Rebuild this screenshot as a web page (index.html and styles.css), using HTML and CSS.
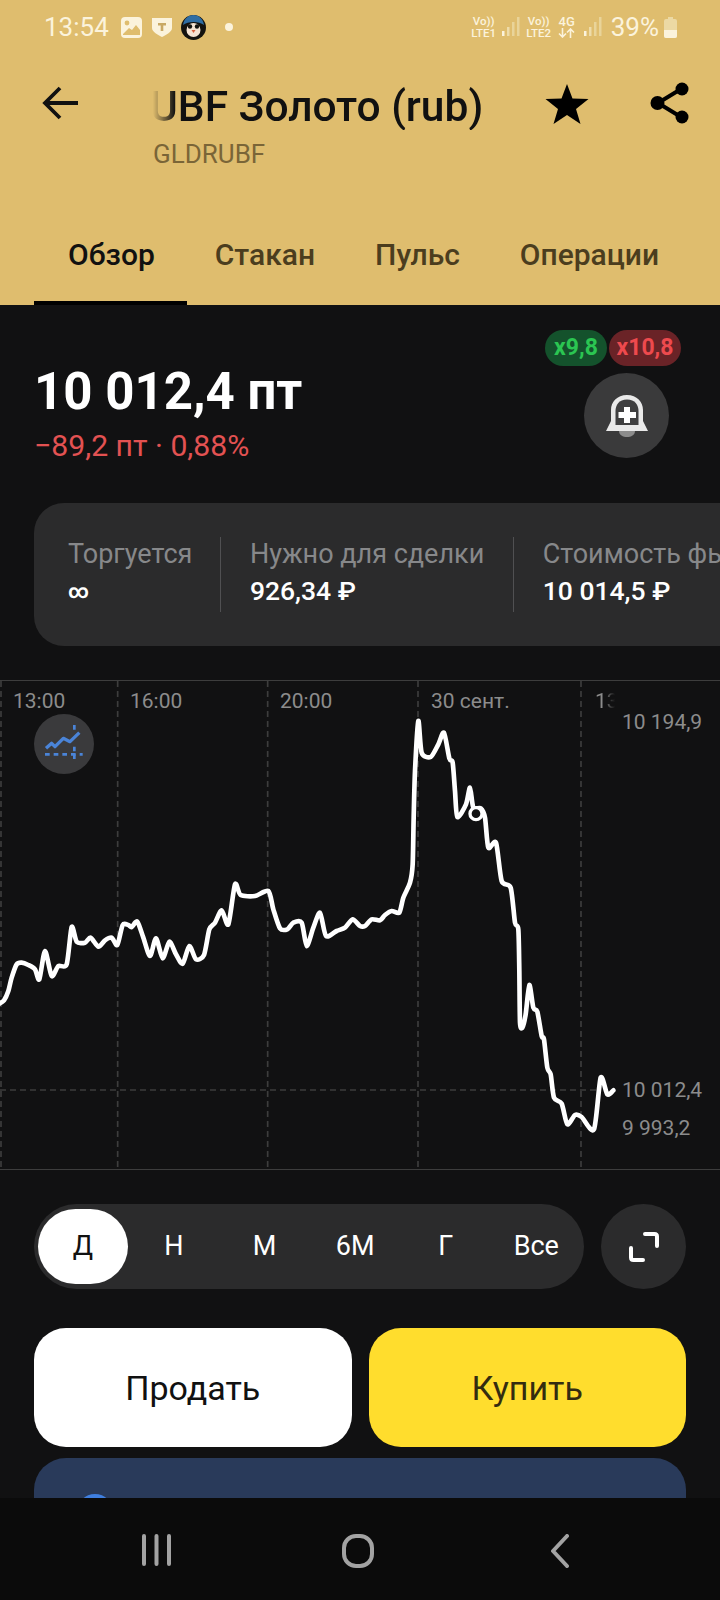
FILE: index.html
```html
<!DOCTYPE html>
<html lang="ru">
<head>
    <meta charset="UTF-8">
    <meta name="viewport" content="width=device-width, initial-scale=1.0">
    <title>UBF Золото (rub)</title>
    <link rel="stylesheet" href="styles.css">
</head>
<body>
    <header class="header">
        <div class="status-bar">
            <div class="status-left">
                <span class="status-time">13:54</span>
                <svg class="status-icon" width="21" height="21" viewBox="0 0 21 21">
                    <rect width="21" height="21" rx="4" fill="#fbf3dc"/>
                    <circle cx="6" cy="6" r="2.4" fill="#dfbd6e"/>
                    <path d="M2 17 L8 11 L11 13 L15 8 L19 13 V18 H2Z" fill="#dfbd6e"/>
                </svg>
                <svg class="status-icon" width="20" height="20" viewBox="0 0 20 20">
                    <path d="M0 1 H20 V11 C20 15 14 18 10 20 C6 18 0 15 0 11Z" fill="#fbf3dc"/>
                    <path d="M6 6 H14 V8.5 H11.3 V14 H8.7 V8.5 H6Z" fill="#c9a964"/>
                </svg>
                <svg class="status-icon" width="25" height="25" viewBox="0 0 25 25">
                    <circle cx="12.5" cy="12.5" r="12.5" fill="#14130f"/>
                    <path d="M2 10 C3 3 8 0 12.5 0 C17 0 22 3 23 10 C18 6 7 6 2 10Z" fill="#2f6da3"/>
                    <ellipse cx="12.5" cy="15" rx="7" ry="7" fill="#f6e4d3"/>
                    <circle cx="9" cy="11.5" r="2.2" fill="#14130f"/>
                    <circle cx="16" cy="11.5" r="2.2" fill="#14130f"/>
                    <path d="M10.5 15 H14.5 L12.5 18Z" fill="#d8603c"/>
                </svg>
                <span class="status-dot"></span>
            </div>
            <div class="status-right">
                <span class="volte">Vo))<br>LTE1</span>
                <svg class="signal" width="18" height="20" viewBox="0 0 18 20">
                    <rect x="0" y="14" width="2.5" height="5" fill="#fbf3dc"/>
                    <rect x="5" y="10" width="2.5" height="9" fill="#eedcaa"/>
                    <rect x="10" y="5" width="2.5" height="14" fill="#e9d499"/>
                    <rect x="15" y="0" width="2.5" height="19" fill="#e9d499"/>
                </svg>
                <span class="volte volte-second">Vo))<br>LTE2</span>
                <span class="volte volte-g">4G
                    <svg class="net-arrows" width="17" height="10" viewBox="0 0 17 10">
                        <path d="M4.5 0 V9 M1 5.5 L4.5 9 L8 5.5 M12.5 10 V1 M9 4.5 L12.5 1 L16 4.5" fill="none" stroke="#fbf3dc" stroke-width="1.6"/>
                    </svg>
                </span>
                <svg class="signal" width="18" height="20" viewBox="0 0 18 20">
                    <rect x="0" y="14" width="2.5" height="5" fill="#fbf3dc"/>
                    <rect x="5" y="10" width="2.5" height="9" fill="#eedcaa"/>
                    <rect x="10" y="5" width="2.5" height="14" fill="#e9d499"/>
                    <rect x="15" y="0" width="2.5" height="19" fill="#e9d499"/>
                </svg>
                <span class="status-battery-text">39%</span>
                <svg width="13" height="21" viewBox="0 0 13 21">
                    <path d="M4 0 H9 V2 H11 Q13 2 13 4 V19 Q13 21 11 21 H2 Q0 21 0 19 V4 Q0 2 2 2 H4Z" fill="#ecd9a4"/>
                    <path d="M0 13 H13 V19 Q13 21 11 21 H2 Q0 21 0 19Z" fill="#fbf3dc"/>
                </svg>
            </div>
        </div>

        <div class="title-row">
            <svg class="back-icon" width="36" height="34" viewBox="0 0 36 34">
                <path d="M18 2 L3 17 L18 32 M3 17 H36" fill="none" stroke="#111" stroke-width="3.8"/>
            </svg>
            <div class="title-block">
                <div class="title-clip"><span class="title">UBF Золото (rub)</span></div>
                <div class="ticker">GLDRUBF</div>
            </div>
            <svg class="star-icon" width="44" height="40" viewBox="0 0 44 40">
                <path d="M22 0 L27.5 14.5 L43.5 15 L31 25 L35.5 40 L22 31 L8.5 40 L13 25 L0.5 15 L16.5 14.5Z" fill="#000"/>
            </svg>
            <svg class="share-icon" width="40" height="42" viewBox="0 0 40 42">
                <path d="M31 7 L8 21 L31 35" fill="none" stroke="#000" stroke-width="4"/>
                <circle cx="32" cy="7" r="6.5" fill="#000"/>
                <circle cx="7.5" cy="21" r="7" fill="#000"/>
                <circle cx="32" cy="35" r="6.5" fill="#000"/>
            </svg>
        </div>

        <nav class="tabs">
            <a class="tab active">Обзор</a>
            <a class="tab">Стакан</a>
            <a class="tab">Пульс</a>
            <a class="tab">Операции</a>
        </nav>
    </header>

    <main class="content">
        <section class="price-row">
            <div class="price-info">
                <div class="price">10 012,4 пт</div>
                <div class="price-change">−89,2 пт · 0,88%</div>
            </div>
            <div class="price-actions">
                <div class="pills">
                    <span class="pill pill-green">x9,8</span>
                    <span class="pill pill-red">x10,8</span>
                </div>
                <div class="bell-button">
                    <svg width="44" height="44" viewBox="0 0 44 44">
                        <path d="M22 1 C12 1 6 8 6 16 V27 L1 37 H43 L38 27 V16 C38 8 32 1 22 1Z" fill="#e9e9e9"/>
                        <path d="M22 5.5 C14 5.5 10.5 11 10.5 17 V31 H33.5 V17 C33.5 11 30 5.5 22 5.5Z" fill="#3f3f40"/>
                        <path d="M19 13 H25 V18 H31 V24 H25 V29 H19 V24 H13.5 V18 H19Z" fill="#fff"/>
                        <path d="M14 37 H30 C30 45 14 45 14 37Z" fill="#8c8c8c"/>
                    </svg>
                </div>
            </div>
        </section>

        <section class="stats">
            <div class="stat stat-first">
                <div class="stat-label">Торгуется</div>
                <div class="stat-value stat-infinity">∞</div>
            </div>
            <div class="stat">
                <div class="stat-label">Нужно для сделки</div>
                <div class="stat-value">926,34 ₽</div>
            </div>
            <div class="stat">
                <div class="stat-label">Стоимость фьючерса</div>
                <div class="stat-value">10 014,5 ₽</div>
            </div>
        </section>

        <section class="chart">
            <!-- viewBox is 3x screen px, so points read straight off a 3x crop -->
            <svg class="chart-lines" viewBox="0 30 2160 1470">
                <g stroke="#3d3d3d" stroke-width="5" stroke-dasharray="18 12" fill="none">
                    <path d="M3 30 V1500"/>
                    <path d="M353 30 V1500"/>
                    <path d="M803 30 V1500"/>
                    <path d="M1254 30 V1500"/>
                    <path d="M1743 30 V1500"/>
                    <path d="M0 1257 H1800"/>
                </g>
                <path id="price-line" fill="none" stroke="#fff" stroke-width="14" stroke-linejoin="round" stroke-linecap="round"/>
                <circle cx="1428" cy="428" r="18" fill="#111" stroke="#fff" stroke-width="10"/>
            </svg>
            <span class="time-label time-1">13:00</span>
            <span class="time-label time-2">16:00</span>
            <span class="time-label time-3">20:00</span>
            <span class="time-label time-4">30 сент.</span>
            <span class="time-label time-5">13:00</span>
            <span class="value-label value-high">10 194,9</span>
            <span class="value-label value-cur">10 012,4</span>
            <span class="value-label value-low">9 993,2</span>
            <div class="chart-button">
                <svg width="60" height="60" viewBox="0 0 180 180">
                    <path d="M36 103 L53 88 L63 98 L88 73 L108 83 L136 56" fill="none" stroke="#4a84d8" stroke-width="10" stroke-linejoin="round"/>
                    <path d="M33 121 H146" fill="none" stroke="#4a84d8" stroke-width="8" stroke-dasharray="14 12"/>
                    <path d="M121 33 V50 M121 98 V143" fill="none" stroke="#4a84d8" stroke-width="8" stroke-dasharray="14 9"/>
                </svg>
            </div>
        </section>

        <section class="range-row">
            <div class="range">
                <span class="range-item active">Д</span>
                <span class="range-item">Н</span>
                <span class="range-item">М</span>
                <span class="range-item">6М</span>
                <span class="range-item">Г</span>
                <span class="range-item">Все</span>
            </div>
            <div class="expand-button">
                <svg width="30" height="30" viewBox="0 0 30 30">
                    <path d="M16 2 H25.5 Q28 2 28 4.5 V14 M2 16 V25.5 Q2 28 4.5 28 H14" fill="none" stroke="#fff" stroke-width="4" stroke-linecap="round"/>
                </svg>
            </div>
        </section>

        <section class="trade-row">
            <button class="trade sell">Продать</button>
            <button class="trade buy">Купить</button>
        </section>

        <section class="promo">
            <span class="promo-icon"></span>
        </section>
    </main>

    <footer class="nav-bar">
        <svg width="29" height="32" viewBox="0 0 29 32">
            <path d="M2 2 V30 M14.5 2 V30 M27 2 V30" stroke="#a3a3a3" stroke-width="4" stroke-linecap="round"/>
        </svg>
        <svg width="32" height="34" viewBox="0 0 32 34">
            <rect x="2" y="2" width="28" height="30" rx="12" fill="none" stroke="#a3a3a3" stroke-width="4"/>
        </svg>
        <svg class="nav-back" width="18" height="34" viewBox="0 0 18 34">
            <path d="M16 2 L2 17 L16 32" fill="none" stroke="#a3a3a3" stroke-width="4" stroke-linecap="round" stroke-linejoin="round"/>
        </svg>
    </footer>

    <script src="chart.js"></script>
</body>
</html>
```

FILE: styles.css
```css
* {
    box-sizing: border-box;
}
html, body {
    margin: 0;
    padding: 0;
}
body {
    width: 720px;
    height: 1600px;
    overflow: hidden;
    display: flex;
    flex-direction: column;
    font-family: Roboto, "Liberation Sans", sans-serif;
    background-color: #111112;
    color: #fff;
}

/* header */
.header {
    height: 305px;
    background-color: #dfbd6e;
    color: #111;
    display: flex;
    flex-direction: column;
}
.status-bar {
    height: 54px;
    padding: 0 43px 0 44px;
    display: flex;
    justify-content: space-between;
    align-items: center;
    color: #fbf3dc;
}
.status-left, .status-right {
    display: flex;
    align-items: center;
}
.status-time {
    font-size: 26px;
    margin-right: 12px;
}
.status-icon {
    margin-right: 10px;
}
.status-icon:nth-of-type(2) {
    margin-right: 9px;
}
.status-dot {
    width: 8px;
    height: 8px;
    border-radius: 50%;
    background-color: #fbf3dc;
    margin-left: 9px;
}
.volte {
    font-size: 11.5px;
    line-height: 12px;
    font-weight: 500;
    text-align: center;
    width: 26px;
    white-space: nowrap;
}
.volte-second {
    margin-left: 6px;
}
.volte-g {
    display: flex;
    flex-direction: column;
    align-items: center;
    width: 18px;
    margin-left: 6px;
    margin-right: 3px;
    font-size: 13px;
}
.net-arrows {
    flex: none;
}
.signal {
    margin-left: 5px;
}
.status-battery-text {
    font-size: 26px;
    margin-left: 9px;
    margin-right: 5px;
}

.title-row {
    height: 92px;
    padding-left: 42px;
    display: flex;
    align-items: flex-start;
}
.back-icon {
    margin-top: 32px;
}
.title-block {
    margin-left: 75px;
    width: 340px;
    padding-top: 29px;
}
.title-clip {
    overflow: hidden;
    white-space: nowrap;
    -webkit-mask-image: linear-gradient(to right, transparent, #000 22px);
    mask-image: linear-gradient(to right, transparent, #000 22px);
}
.title {
    font-size: 42.5px;
    line-height: 47px;
    font-weight: 500;
    margin-left: -3px;
}
.ticker {
    margin-top: 9px;
    font-size: 26px;
    line-height: 30px;
    color: #7a6537;
}
.star-icon {
    margin-left: 52px;
    margin-top: 30px;
}
.share-icon {
    margin-left: 61px;
    margin-top: 28px;
}

.tabs {
    margin-top: auto;
    height: 70px;
    padding-left: 38px;
    display: flex;
    align-items: flex-start;
    font-size: 30px;
    font-weight: 500;
    color: #4b3d1e;
}
.tab {
    position: relative;
    height: 70px;
    padding: 0 30px;
    line-height: 40px;
}
.tab.active {
    color: #111;
}
.tab.active::after {
    content: "";
    position: absolute;
    left: -4px;
    right: -2px;
    bottom: 0;
    height: 4px;
    background-color: #000;
}

/* content */
.content {
    flex: 1;
    min-height: 0;
    overflow: hidden;
}
.price-row {
    height: 198px;
    padding: 25px 39px 0 34px;
    display: flex;
    justify-content: space-between;
}
.price {
    margin-top: 33px;
    font-size: 51px;
    line-height: 58px;
    font-weight: 700;
}
.price-change {
    margin-top: 9px;
    font-size: 30.2px;
    line-height: 32px;
    color: #e35252;
}
.price-actions {
    display: flex;
    flex-direction: column;
    align-items: flex-end;
    gap: 7px;
}
.pills {
    display: flex;
    gap: 2px;
}
.pill {
    height: 36px;
    line-height: 36px;
    border-radius: 18px;
    text-align: center;
    font-size: 23px;
    font-weight: 700;
}
.pill-green {
    width: 62px;
    background-color: #14522c;
    color: #2bc652;
}
.pill-red {
    width: 72px;
    background-color: #6a2327;
    color: #ee4a4e;
}
.bell-button {
    width: 85px;
    height: 85px;
    margin-right: 12px;
    border-radius: 50%;
    background-color: #3a3a3b;
    display: flex;
    align-items: center;
    justify-content: center;
}

.stats {
    margin-left: 34px;
    height: 143px;
    border-radius: 30px 0 0 30px;
    background-color: #2b2b2c;
    display: flex;
    align-items: center;
    overflow: hidden;
    white-space: nowrap;
}
.stat {
    flex: none;
    height: 75px;
    padding: 0 29px 0 28.5px;
    border-left: 1px solid #505052;
}
.stat-first {
    padding: 0 28px 0 34px;
    border-left: none;
}
.stat-label {
    font-size: 27px;
    line-height: 35px;
    color: #87888a;
}
.stat-value {
    margin-top: 1px;
    font-size: 26.5px;
    line-height: 36px;
    font-weight: 500;
    color: #fff;
}
.stat-infinity {
    font-size: 20px;
    font-weight: 700;
}

.chart {
    position: relative;
    margin-top: 34px;
    height: 490px;
    border-top: 1px solid #3d3d3d;
    border-bottom: 1px solid #3d3d3d;
    overflow: hidden;
}
.chart-lines {
    position: absolute;
    left: 0;
    top: 0;
    width: 720px;
    height: 490px;
}
.time-label, .value-label {
    position: absolute;
    font-size: 21px;
    line-height: 24px;
    color: #8c8c8c;
}
.time-label {
    top: 8px;
}
.time-1 { left: 13px; }
.time-2 { left: 130px; }
.time-3 { left: 280px; }
.time-4 { left: 431px; }
.time-5 {
    left: 595px;
    width: 20px;
    overflow: hidden;
    white-space: nowrap;
    -webkit-mask-image: linear-gradient(to right, #000 8px, transparent);
    mask-image: linear-gradient(to right, #000 8px, transparent);
}
.value-label {
    left: 622px;
}
.value-high { top: 29px; }
.value-cur { top: 397px; }
.value-low { top: 435px; }
.chart-button {
    position: absolute;
    left: 34px;
    top: 33px;
    width: 60px;
    height: 60px;
    border-radius: 50%;
    background-color: #3a3a3c;
}

.range-row {
    margin-top: 34px;
    padding: 0 34px;
    display: flex;
    justify-content: space-between;
}
.range {
    width: 550px;
    height: 85px;
    padding: 5px 4px;
    border-radius: 43px;
    background-color: #2b2b2c;
    display: flex;
}
.range-item {
    flex: none;
    width: 90.6px;
    line-height: 75px;
    text-align: center;
    font-size: 27px;
    border-radius: 38px;
}
.range-item.active {
    width: 89.6px;
    margin-right: 1px;
    background-color: #fff;
    color: #111;
}
.expand-button {
    width: 85px;
    height: 85px;
    border-radius: 50%;
    background-color: #2b2b2c;
    display: flex;
    align-items: center;
    justify-content: center;
}

.trade-row {
    margin-top: 39px;
    padding: 0 34px;
    display: flex;
    gap: 17px;
}
.trade {
    flex: 1;
    height: 119px;
    border: none;
    border-radius: 32px;
    font-family: inherit;
    font-size: 34px;
    color: #111;
}
.sell {
    background-color: #fff;
}
.buy {
    background-color: #ffdd2d;
    color: #332c10;
}

.promo {
    margin: 11px 34px 0;
    height: 120px;
    border-radius: 32px;
    background-color: #293a5a;
    padding: 36px 0 0 43px;
}
.promo-icon {
    display: block;
    width: 36px;
    height: 36px;
    border-radius: 50%;
    background-color: #3f7fe0;
}

.nav-bar {
    height: 102px;
    flex: none;
    background-color: #0b0b0b;
    display: flex;
    align-items: flex-start;
    padding: 36px 0 0 142px;
    gap: 171px;
}
.nav-back {
    margin-left: 6px;
}
```

FILE: chart.js
```js
// price points, in the chart's 3x viewBox units
const points = [
    [-5, 1000], [12, 988], [25, 960], [35, 920], [50, 880], [65, 875], [85, 882], [105, 895],
    [118, 925], [135, 840], [155, 915], [175, 885], [200, 880], [215, 768], [230, 812], [255, 815],
    [272, 800], [295, 827], [315, 808], [335, 800], [352, 822], [368, 762], [385, 762], [395, 768],
    [412, 752], [430, 800], [450, 855], [468, 802], [488, 862], [508, 812], [528, 850], [548, 878],
    [568, 825], [588, 865], [612, 852], [628, 775], [645, 755], [665, 718], [685, 760], [705, 640],
    [722, 672], [765, 675], [805, 660], [820, 715], [840, 772], [862, 775], [880, 755], [905, 755],
    [920, 825], [940, 770], [960, 725], [978, 795], [1010, 780], [1035, 770], [1058, 745], [1080, 765],
    [1095, 765], [1115, 745], [1140, 748], [1155, 732], [1175, 720], [1198, 725], [1210, 680], [1230, 635],
    [1238, 580], [1241, 440], [1245, 300], [1255, 150], [1265, 245], [1292, 258], [1315, 220], [1332, 185],
    [1348, 262], [1358, 275], [1365, 360], [1372, 438], [1398, 400], [1410, 350], [1420, 410], [1442, 412],
    [1455, 440], [1465, 530], [1488, 515], [1505, 630], [1532, 650], [1545, 755], [1555, 775], [1558, 900],
    [1560, 1055], [1567, 1070], [1577, 1030], [1588, 942], [1600, 1010], [1612, 1022], [1625, 1095], [1632, 1105],
    [1642, 1190], [1652, 1210], [1662, 1280], [1685, 1298], [1702, 1360], [1725, 1332], [1745, 1338], [1782, 1375],
    [1802, 1220], [1822, 1270], [1840, 1258]
];

// catmull-rom through the points, kept a bit tight so the tall drops don't overshoot
function smoothPath(pts) {
    let d = `M${pts[0][0]} ${pts[0][1]}`;
    for (let i = 0; i < pts.length - 1; i++) {
        const p0 = pts[i - 1] || pts[i];
        const p1 = pts[i];
        const p2 = pts[i + 1];
        const p3 = pts[i + 2] || p2;
        const c1x = p1[0] + (p2[0] - p0[0]) / 8;
        const c1y = p1[1] + (p2[1] - p0[1]) / 8;
        const c2x = p2[0] - (p3[0] - p1[0]) / 8;
        const c2y = p2[1] - (p3[1] - p1[1]) / 8;
        d += ` C${c1x} ${c1y} ${c2x} ${c2y} ${p2[0]} ${p2[1]}`;
    }
    return d;
}

document.getElementById('price-line').setAttribute('d', smoothPath(points));
```
